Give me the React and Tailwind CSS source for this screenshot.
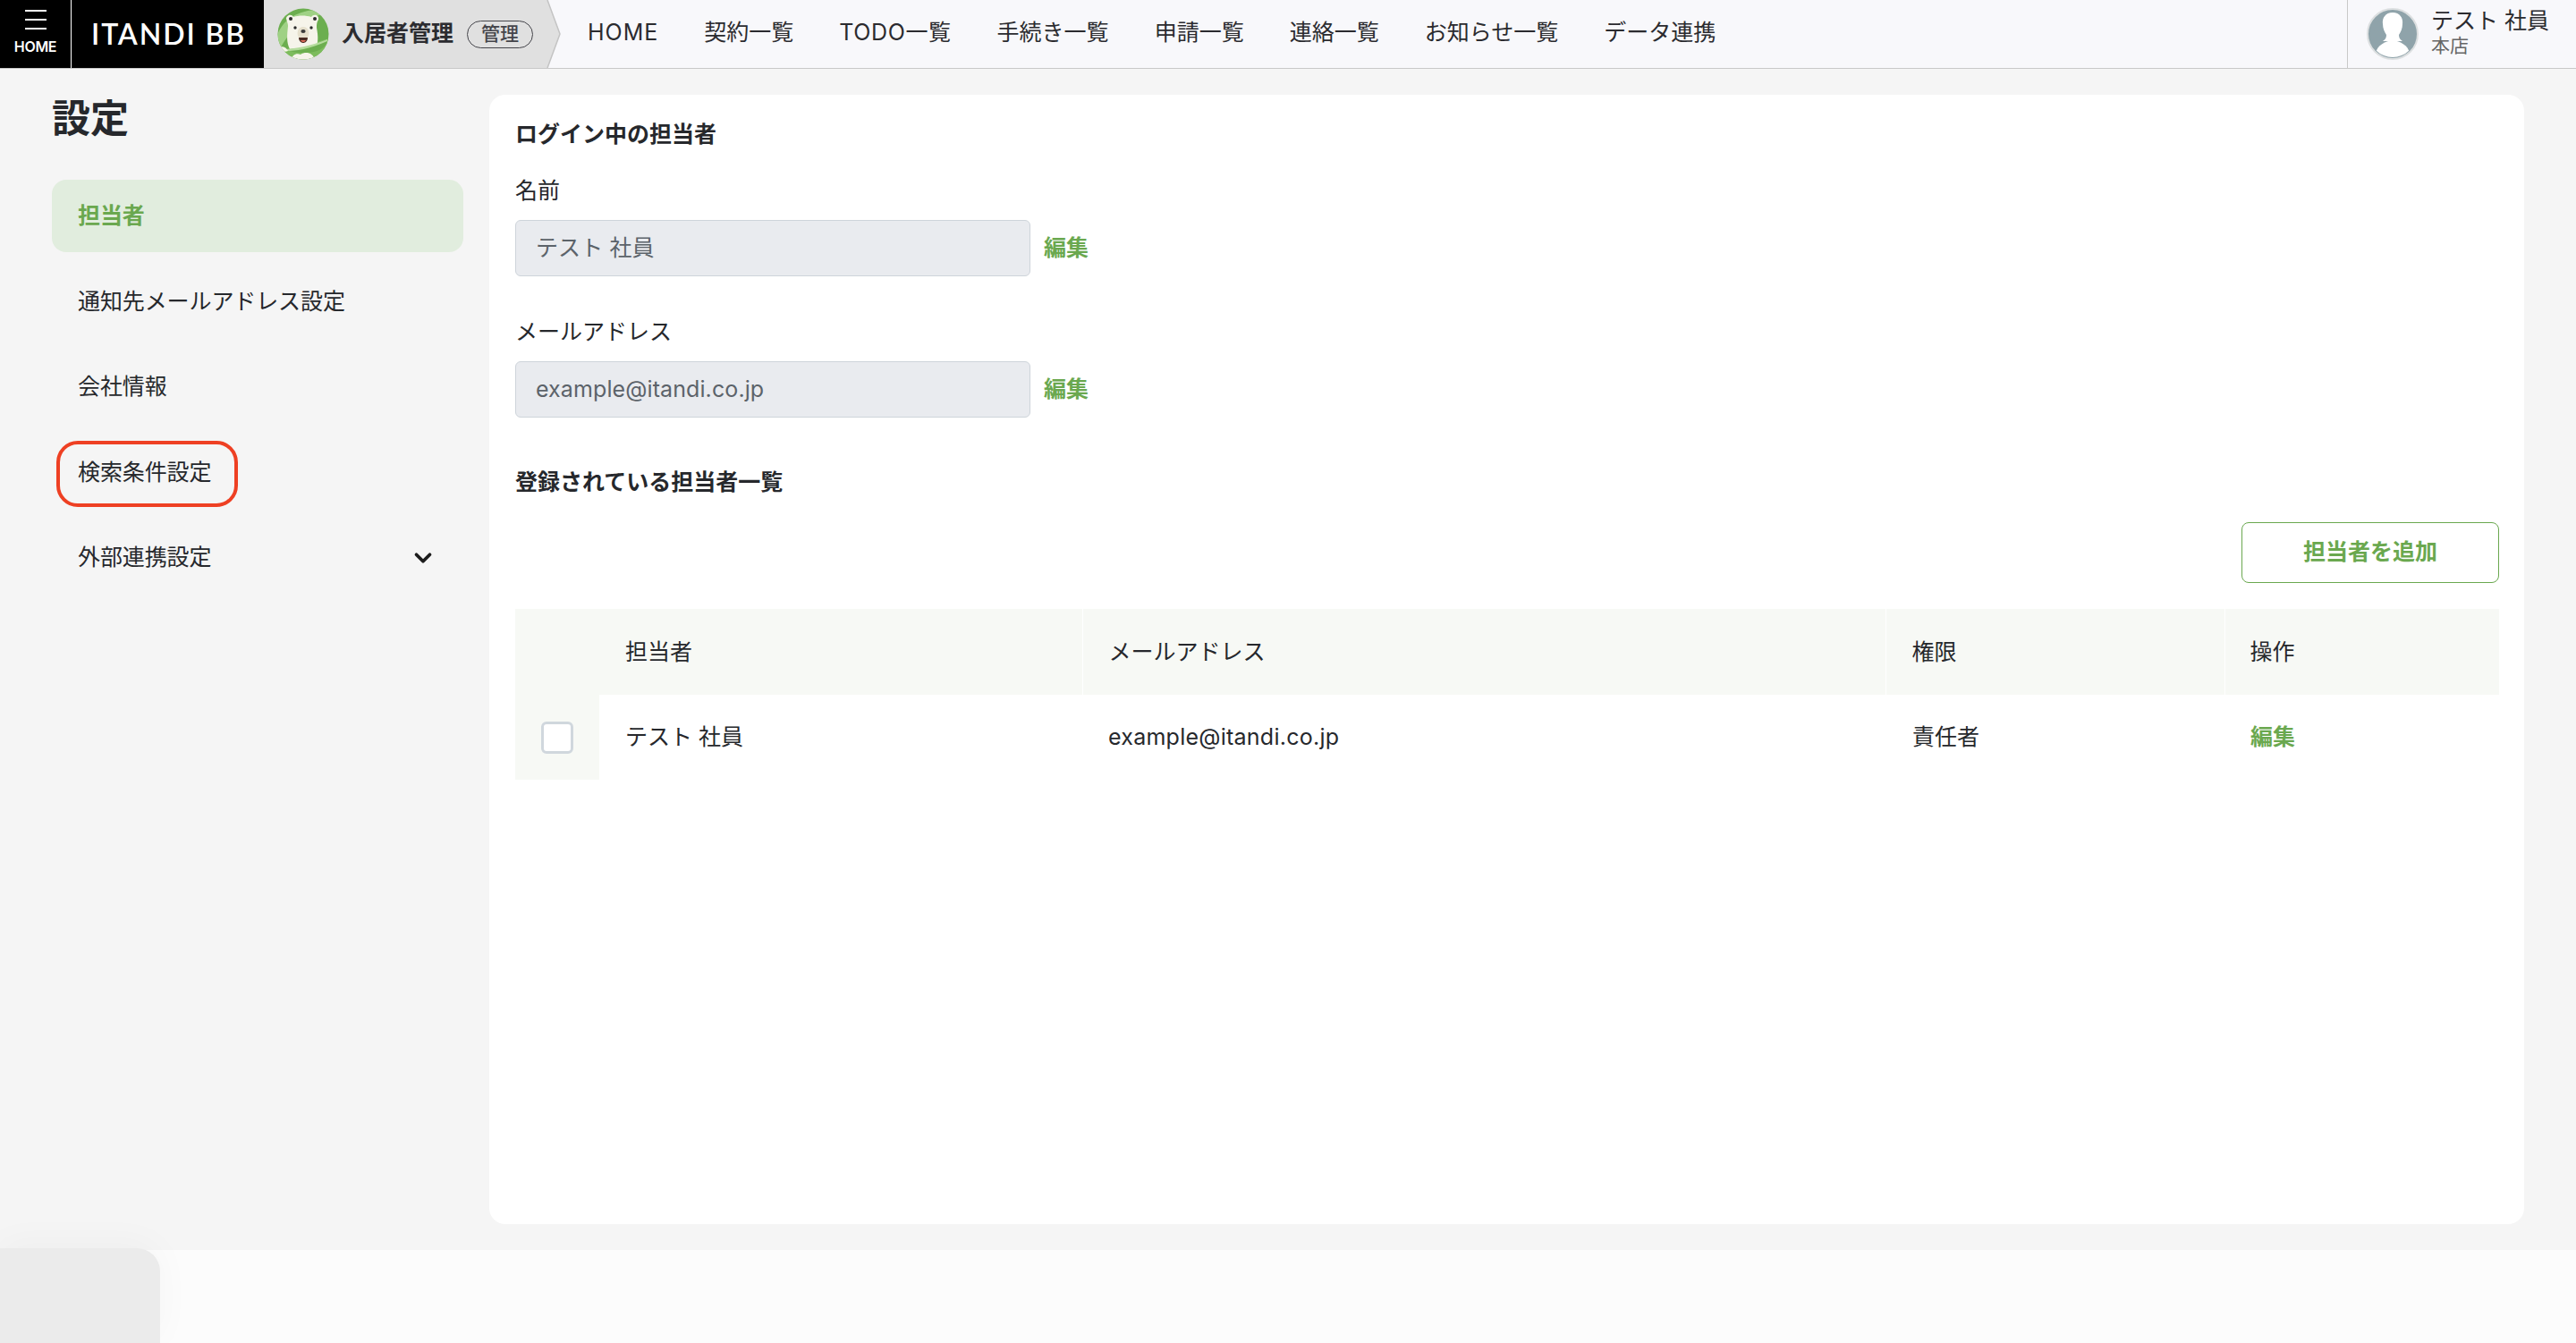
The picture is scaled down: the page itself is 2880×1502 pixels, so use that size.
import { ChevronDown } from 'lucide-react';

const font = { fontFamily: '"Inter", "Noto Sans CJK JP", sans-serif' };

const navItems = [
  { label: 'HOME', className: 'tracking-[1px]' },
  { label: '契約一覧' },
  { label: 'TODO一覧', className: 'tracking-[0.6px]' },
  { label: '手続き一覧' },
  { label: '申請一覧' },
  { label: '連絡一覧' },
  { label: 'お知らせ一覧' },
  { label: 'データ連携' },
];

function BearLogo() {
  return (
    <svg width="58" height="58" viewBox="0 0 58 58" className="shrink-0">
      <defs>
        <clipPath id="bear-clip">
          <circle cx="29" cy="29" r="28.5" />
        </clipPath>
      </defs>
      <g clipPath="url(#bear-clip)">
        <rect width="58" height="58" fill="#6cae4f" />
        <path d="M0 30 C6 14 20 4 42 2 L58 0 L58 6 C38 8 18 18 4 44 L0 48 Z" fill="#9fd184" />
        <path d="M0 50 L58 34 L58 58 L0 58 Z" fill="#7dbc5d" />
        <path d="M10 12 C10 8 16 6 18 10 C24 8 32 8 38 10 C41 6 47 8 46 13 C44 16 44 18 44 22 C46 32 46 40 42 46 L14 46 C10 38 11 30 12 20 C12 18 11 15 10 12 Z" fill="#f6f4ea" />
        <circle cx="15" cy="12" r="2" fill="#2b2b2b" />
        <circle cx="42" cy="12" r="2" fill="#2b2b2b" />
        <circle cx="20" cy="22" r="1.7" fill="#2b2b2b" />
        <circle cx="38" cy="22" r="1.7" fill="#2b2b2b" />
        <ellipse cx="29" cy="28" rx="6.5" ry="7" fill="#e6e0cd" />
        <ellipse cx="29" cy="26" rx="2.6" ry="1.9" fill="#3a3a3a" />
        <path d="M24 33 H34 C34 38 30 39 29 39 C28 39 24 38 24 33 Z" fill="#4a2b22" />
        <path d="M26 36 H32 C31 38.5 27 38.5 26 36 Z" fill="#e46c5c" />
        <path d="M10 46 C20 46 36 44 56 36 C54 46 44 50 30 50 C22 50 14 49 10 46 Z" fill="#6cae4f" />
        <path d="M10 46 C20 45 36 43 56 35 L56 37 C36 46 20 48 10 48 Z" fill="#b5dc9d" />
        <path d="M16 58 C16 52 22 50 26 52 C32 48 40 50 42 58 Z" fill="#f6f4ea" />
        <path d="M2 44 C6 42 10 44 12 48 C8 50 4 48 2 44 Z" fill="#f6f4ea" />
      </g>
    </svg>
  );
}

function UserAvatar() {
  return (
    <svg width="58" height="58" viewBox="0 0 58 58" className="shrink-0">
      <defs>
        <clipPath id="avatar-clip">
          <circle cx="29" cy="29" r="26" />
        </clipPath>
      </defs>
      <circle cx="29" cy="29" r="28" fill="#8fa3aa" stroke="#dcdfe0" strokeWidth="2" />
      <g clipPath="url(#avatar-clip)">
        <path d="M29 5 C37 5 41 11 40 18 C40 23 38 27 36 30 C36 33 37 35 40 37 L18 37 C21 35 22 33 22 30 C20 27 18 23 18 18 C17 11 21 5 29 5 Z" fill="#fff" />
        <path d="M10 50 C12 42 20 37 29 36 C38 37 46 42 48 50 C44 54 36 56 29 56 C22 56 14 54 10 50 Z" fill="#fff" />
      </g>
    </svg>
  );
}

function Header() {
  return (
    <header className="flex h-[77px] shrink-0 border-b border-[#c9c9c9] bg-[#f8f8fb]">
      <div className="flex h-[76px] w-[295px] shrink-0 bg-black text-white">
        <div className="flex w-[80px] flex-col items-center border-r border-white pt-[11px]">
          <div className="flex w-[24px] flex-col gap-[8px]">
            <span className="h-[2px] bg-white" />
            <span className="h-[2px] bg-white" />
            <span className="h-[2px] bg-white" />
          </div>
          <span className="mt-[9px] text-[16px] font-semibold leading-[20px] tracking-[-0.3px]">HOME</span>
        </div>
        <span className="pl-[22px] text-[32px] font-semibold leading-[76px] tracking-[1.9px]" style={{ fontFamily: 'Lato, sans-serif' }}>
          ITANDI BB
        </span>
      </div>

      <div className="relative flex h-[76px] w-[316px] shrink-0 items-center bg-[#e0e0e0] pl-[15px]">
        <BearLogo />
        <span className="ml-[14px] text-[25px] font-bold text-[#2c2c30]">入居者管理</span>
        <span className="ml-[15px] flex h-[31px] w-[74px] items-center justify-center rounded-full border-[1.5px] border-[#45454b] text-[21px] font-medium text-[#45454b]">
          管理
        </span>
        <svg width="16" height="76" viewBox="0 0 16 76" className="absolute left-full top-0">
          <path d="M0 0 L1 0 L15 38 L1 76 L0 76 Z" fill="#e0e0e0" />
          <path d="M1 0 L15 38 L1 76" fill="none" stroke="#c4c4c4" strokeWidth="1.5" />
        </svg>
      </div>

      <nav className="ml-[46px] flex h-[76px] items-center gap-[51px] pb-[2px] text-[25px] text-[#2b2b2f]">
        {navItems.map((item) => (
          <span key={item.label} className={`whitespace-nowrap ${item.className || ''}`}>{item.label}</span>
        ))}
      </nav>

      <div className="ml-auto flex h-[76px] w-[256px] items-center border-l border-[#c9c9c9] pl-[21px]">
        <UserAvatar />
        <div className="ml-[14px] flex flex-col pb-[6px]">
          <span className="whitespace-nowrap text-[25px] leading-[32px] text-[#2b2b2f]">テスト 社員</span>
          <span className="text-[21px] leading-[24px] text-[#666]">本店</span>
        </div>
      </div>
    </header>
  );
}

function Sidebar() {
  const items = ['通知先メールアドレス設定', '会社情報'];
  return (
    <aside className="ml-[58px] w-[460px] shrink-0">
      <h1 className="mt-[34px] text-[43px] font-bold leading-none text-[#26282c]">設定</h1>
      <div className="mt-[47px] flex flex-col gap-[14.5px] text-[25px] tracking-[-0.1px] text-[#26282c]">
        <div className="flex h-[81px] items-center rounded-[16px] bg-[#e1edde] pl-[29px] font-bold text-[#6aa84f]">担当者</div>
        {items.map((item) => (
          <div key={item} className="flex h-[81px] items-center pl-[29px] pt-[1px]">{item}</div>
        ))}
        <div className="flex h-[81px] items-center pl-[29px] pt-[1px]">
          <span className="relative">
            検索条件設定
            <span className="absolute -left-[24px] -right-[30px] -top-[17px] -bottom-[20px] rounded-[24px] border-[4px] border-[#ee4023]" />
          </span>
        </div>
        <div className="flex h-[81px] items-center justify-between pl-[29px] pr-[30px] pt-[1px]">
          外部連携設定
          <ChevronDown size={30} strokeWidth={3} className="text-[#1c1c1c]" />
        </div>
      </div>
    </aside>
  );
}

function ReadonlyField({ label, value, className }) {
  return (
    <div className={className}>
      <div className="text-[25px] leading-[36px] text-[#26282c]">{label}</div>
      <div className="mt-[15px] flex items-center">
        <div className="flex h-[63px] w-[576px] items-center rounded-[6px] border border-[#ced4da] bg-[#e9ebef] pl-[22px] pt-[1px] text-[25px] tracking-[0.1px] text-[#5c636a]">
          {value}
        </div>
        <span className="ml-[15px] text-[25px] font-bold text-[#6aa84f]">編集</span>
      </div>
    </div>
  );
}

function StaffTable() {
  return (
    <table className="mt-[29px] w-[2218px] table-fixed border-collapse text-left text-[25px] text-[#26282c]">
      <colgroup>
        <col className="w-[94px]" />
        <col className="w-[540px]" />
        <col className="w-[898px]" />
        <col className="w-[379px]" />
        <col className="w-[307px]" />
      </colgroup>
      <thead>
        <tr className="h-[96px] bg-[#f7f9f5]">
          <th />
          <th className="pl-[29px] pt-[2px] font-normal">担当者</th>
          <th className="border-l border-white pl-[29px] pt-[2px] font-normal">メールアドレス</th>
          <th className="border-l border-white pl-[29px] pt-[2px] font-normal">権限</th>
          <th className="border-l border-white pl-[28px] pt-[2px] font-normal">操作</th>
        </tr>
      </thead>
      <tbody>
        <tr className="h-[95px]">
          <td className="bg-[#f7f9f5] pl-[29px]">
            <div className="h-[36px] w-[36px] rounded-[6px] border-[3px] border-[#d0d7dd] bg-white" />
          </td>
          <td className="pl-[29px]">テスト 社員</td>
          <td className="pl-[29px] tracking-[0.25px]">example@itandi.co.jp</td>
          <td className="pl-[30px]">責任者</td>
          <td className="pl-[29px] font-bold text-[#6aa84f]">編集</td>
        </tr>
      </tbody>
    </table>
  );
}

export default function App() {
  return (
    <div className="relative flex h-[1502px] w-[2880px] flex-col overflow-hidden bg-[#f5f5f5]" style={font}>
      <Header />
      <main className="flex h-[1321px] shrink-0">
        <Sidebar />
        <section className="ml-[29px] mr-[58px] mt-[29px] h-[1263px] flex-1 rounded-[18px] bg-white pl-[29px] pt-[26px]">
          <h2 className="text-[25px] font-bold leading-[36px] text-[#26282c]">ログイン中の担当者</h2>
          <ReadonlyField className="mt-[27px]" label="名前" value="テスト 社員" />
          <ReadonlyField className="mt-[44px]" label="メールアドレス" value="example@itandi.co.jp" />
          <h2 className="mt-[54px] text-[25px] font-bold leading-[36px] text-[#26282c]">登録されている担当者一覧</h2>
          <div className="mt-[27px] flex w-[2218px] justify-end">
            <button className="h-[68px] w-[288px] rounded-[8px] border-[1.5px] border-[#6aa84f] bg-white text-[25px] font-bold text-[#6aa84f]">
              担当者を追加
            </button>
          </div>
          <StaffTable />
        </section>
      </main>
      <footer className="h-[104px] bg-[#fcfcfc]" />
      <div className="absolute bottom-0 left-0 h-[106px] w-[179px] rounded-tr-[26px] bg-[#ebebeb] shadow-[0_-6px_40px_rgba(0,0,0,0.03)]" />
    </div>
  );
}
